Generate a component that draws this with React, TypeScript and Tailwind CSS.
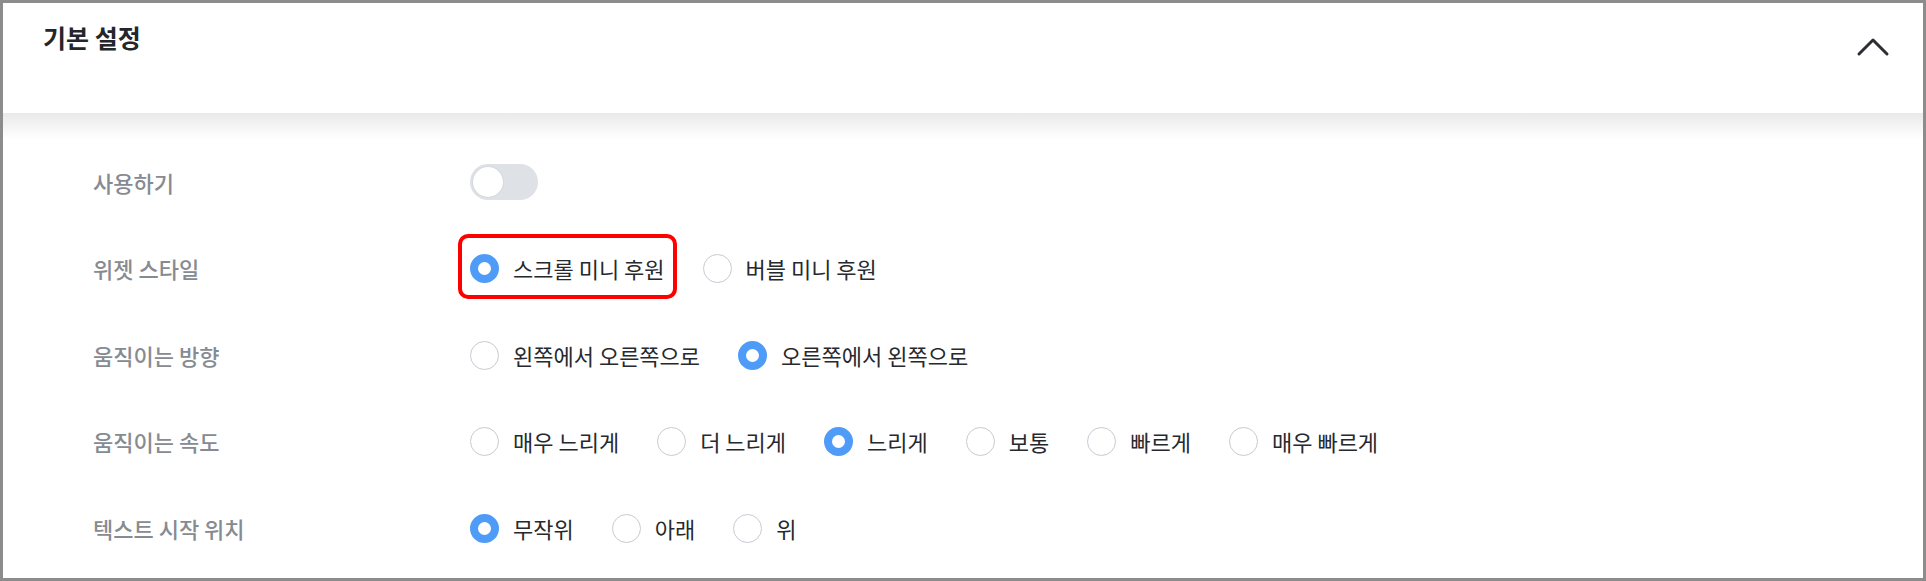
import React from "react";

const font = { fontFamily: '"Noto Sans CJK KR", "Noto Sans", sans-serif' };

function Radio({ checked }: { checked?: boolean }) {
  return checked ? (
    <span className="block w-[29px] h-[29px] rounded-full border-[8px] border-[#4f9cf8] bg-white shrink-0" />
  ) : (
    <span className="block w-[29px] h-[29px] rounded-full border-[1.5px] border-[#c6cbd2] bg-white shrink-0" />
  );
}

function Option({ label, checked, highlight }: { label: string; checked?: boolean; highlight?: boolean }) {
  return (
    <div className="relative flex items-center gap-[14px] mr-[38px]">
      <Radio checked={checked} />
      <span className="text-[22px] leading-[29px] text-[#26292d] whitespace-nowrap">{label}</span>
      {highlight && (
        <span className="absolute -left-[12px] -right-[12px] -top-[20px] -bottom-[16px] border-[4px] border-[#ff0000] rounded-[10px] pointer-events-none" />
      )}
    </div>
  );
}

function Row({ label, children }: { label: string; children: React.ReactNode }) {
  return (
    <div className="flex items-center h-[86.5px] pl-[90px]">
      <div className="w-[377px] text-[22px] leading-[29px] font-medium text-[#868b92]">{label}</div>
      <div className="flex items-center">{children}</div>
    </div>
  );
}

export default function App() {
  return (
    <div style={font} className="w-[1926px] h-[581px] border-[3px] border-[#8c8c8c] bg-white overflow-hidden">
      <div className="flex justify-between items-start h-[110px] bg-white">
        <h2 className="pl-[40px] pt-[18px] text-[25px] leading-[32px] font-bold text-[#23262a]">기본 설정</h2>
        <svg className="mt-[34px] mr-[33px]" width="34" height="20" viewBox="0 0 34 20" fill="none">
          <polyline points="3,17 17,3 31,17" stroke="#2b2f34" strokeWidth="3" strokeLinecap="round" strokeLinejoin="round" />
        </svg>
      </div>
      <div className="h-[26px] bg-gradient-to-b from-[#e9e9e9] to-white" />
      <Row label="사용하기">
        <div className="w-[68px] h-[36px] rounded-full bg-[#dee1e5] flex items-center pl-[3px]">
          <span className="block w-[30px] h-[30px] rounded-full bg-white shadow-[0_0_2px_rgba(0,0,0,0.12)]" />
        </div>
      </Row>
      <Row label="위젯 스타일">
        <Option label="스크롤 미니 후원" checked highlight />
        <Option label="버블 미니 후원" />
      </Row>
      <Row label="움직이는 방향">
        <Option label="왼쪽에서 오른쪽으로" />
        <Option label="오른쪽에서 왼쪽으로" checked />
      </Row>
      <Row label="움직이는 속도">
        <Option label="매우 느리게" />
        <Option label="더 느리게" />
        <Option label="느리게" checked />
        <Option label="보통" />
        <Option label="빠르게" />
        <Option label="매우 빠르게" />
      </Row>
      <Row label="텍스트 시작 위치">
        <Option label="무작위" checked />
        <Option label="아래" />
        <Option label="위" />
      </Row>
    </div>
  );
}
